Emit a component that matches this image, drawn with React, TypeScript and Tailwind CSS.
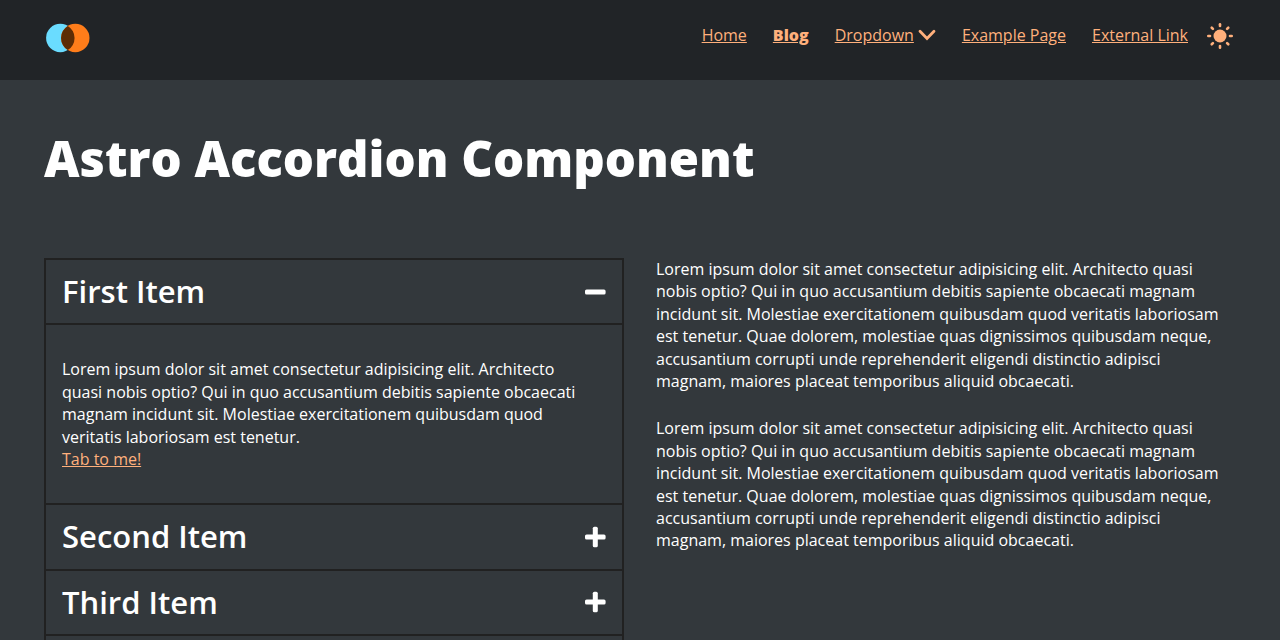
import { useState } from "react";
import type { ReactNode } from "react";

const LOREM =
  "Lorem ipsum dolor sit amet consectetur adipisicing elit. Architecto quasi nobis optio? Qui in quo accusantium debitis sapiente obcaecati magnam incidunt sit. Molestiae exercitationem quibusdam quod veritatis laboriosam est tenetur.";
const LOREM_LONG =
  LOREM +
  " Quae dolorem, molestiae quas dignissimos quibusdam neque, accusantium corrupti unde reprehenderit eligendi distinctio adipisci magnam, maiores placeat temporibus aliquid obcaecati.";

function Logo() {
  return (
    <svg viewBox="0 -1 44 32" className="block h-8 w-11" aria-hidden="true">
      <circle cx="14.3" cy="15" r="14.2" fill="#6adcff" />
      <circle cx="29.3" cy="15" r="14.2" fill="#ff7d1a" />
      <path d="M21.8 2.9a14.2 14.2 0 0 1 0 24.2a14.2 14.2 0 0 1 0-24.2z" fill="#5c2c05" />
    </svg>
  );
}

function Chevron() {
  return (
    <svg viewBox="0 0 18 12" className="h-3 w-[18px]" fill="none" stroke="currentColor" strokeWidth="2.8" aria-hidden="true">
      <path d="M2 2.2 9 9.4l7-7.2" strokeLinecap="round" strokeLinejoin="miter" />
    </svg>
  );
}

function Sun() {
  return (
    <svg viewBox="-14 -14 28 28" className="block size-7" aria-hidden="true">
      <circle r="6.5" fill="currentColor" />
      <g stroke="currentColor" strokeWidth="2.6" strokeLinecap="round">
        {[0, 45, 90, 135, 180, 225, 270, 315].map((a) => (
          <path key={a} d="M0-10v-1.7" transform={`rotate(${a})`} />
        ))}
      </g>
    </svg>
  );
}

function Toggle({ open }: { open: boolean }) {
  return (
    <svg viewBox="0 0 22 22" className="size-[22px] shrink-0" fill="currentColor" aria-hidden="true">
      <rect x="1" y="8.5" width="20.6" height="5" rx="1.6" />
      {!open && <rect x="8.8" y="0.7" width="5" height="20.6" rx="1.6" />}
    </svg>
  );
}

function Item({ id, title, initial = false, children }: { id: string; title: string; initial?: boolean; children: ReactNode }) {
  const [open, setOpen] = useState(initial);
  return (
    <li className="border-b-2 border-[#212121]">
      <h2>
        <button
          type="button"
          aria-expanded={open}
          aria-controls={id}
          onClick={() => setOpen(!open)}
          className="flex w-full items-center justify-between px-4 py-2.5 text-left text-[31px] leading-[1.4] font-semibold"
        >
          {title}
          <Toggle open={open} />
        </button>
      </h2>
      <div id={id} hidden={!open} className="border-t-2 border-[#212121] py-[33px] pr-8 pl-4">
        {children}
      </div>
    </li>
  );
}

const link = "text-[#ffb07c] underline";

export default function App() {
  return (
    <div className="min-h-screen bg-[#33383c] font-['Open_Sans',sans-serif] text-base leading-[1.4] text-white">
      <header className="flex h-20 items-start justify-between bg-[#212427] px-[46px] pt-[22px]">
        <a href="#" aria-label="Home page">
          <Logo />
        </a>
        <nav className="flex items-center text-[#ffb07c]" aria-label="Main">
          <ul className="flex items-center gap-[26px] pb-0.5">
            <li><a href="#" className={link}>Home</a></li>
            <li><a href="#" className="font-extrabold text-[#ffb07c] underline" aria-current="page">Blog</a></li>
            <li>
              <button type="button" aria-haspopup="true" className="flex items-center gap-1 underline">
                Dropdown
                <Chevron />
              </button>
            </li>
            <li><a href="#" className={link}>Example Page</a></li>
            <li><a href="#" className={link}>External Link</a></li>
          </ul>
          <button type="button" aria-label="Toggle theme" className="ml-[18px]">
            <Sun />
          </button>
        </nav>
      </header>
      <main className="px-11 pt-11">
        <h1 className="text-[49px] leading-[68px] font-extrabold">Astro Accordion Component</h1>
        <div className="mt-16 grid grid-cols-2 gap-8 pt-0.5">
          <ul className="self-start border-2 border-b-0 border-[#212121]">
            <Item id="first" title="First Item" initial>
              <p>{LOREM}</p>
              <a href="#" className={link}>Tab to me!</a>
            </Item>
            <Item id="second" title="Second Item"><p>{LOREM}</p></Item>
            <Item id="third" title="Third Item"><p>{LOREM}</p></Item>
            <Item id="fourth" title="Fourth Item"><p>{LOREM}</p></Item>
          </ul>
          <div className="flex flex-col gap-[25px] pr-2">
            <p>{LOREM_LONG}</p>
            <p>{LOREM_LONG}</p>
          </div>
        </div>
      </main>
    </div>
  );
}
